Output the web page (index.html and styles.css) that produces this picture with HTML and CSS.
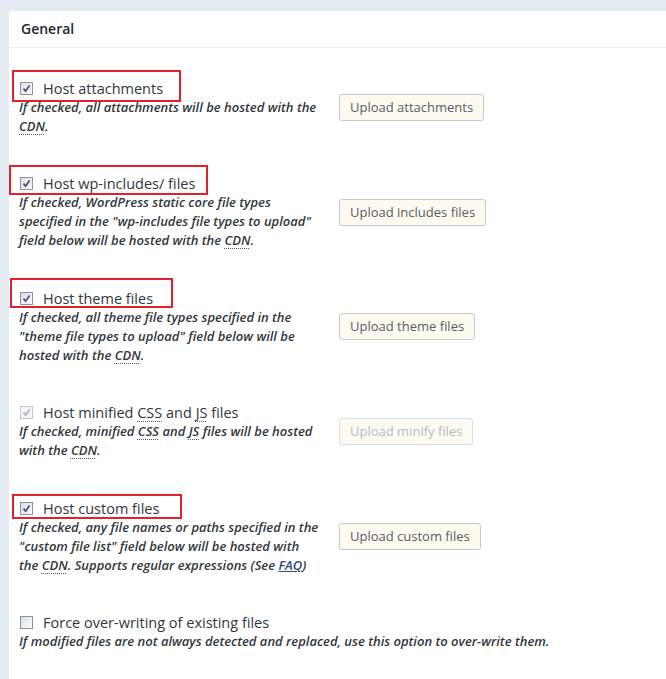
FILE: index.html
```html
<!DOCTYPE html>
<html lang="en">
<head>
<meta charset="utf-8">
<title>General</title>
<link rel="stylesheet" href="styles.css">
</head>
<body>
<div class="postbox">
  <h3 class="hndle">General</h3>
  <div class="inside">

    <div class="opt">
      <div class="opt-main">
        <label class="opt-label">
          <svg class="cb" width="13" height="13" viewBox="0 0 13 13"><defs><linearGradient id="g1" x1="0" y1="0" x2="1" y2="1"><stop offset="0" stop-color="#d9dfe6"/><stop offset="1" stop-color="#fbfcfd"/></linearGradient></defs><rect x="0.5" y="0.5" width="12" height="12" fill="url(#g1)" stroke="#8c939b"/><path d="M3.5 6.6 L5.6 9.2 L9.6 3.4" fill="none" stroke="#3f5078" stroke-width="1.7"/></svg>
          <span class="label-text">Host attachments</span>
          <span class="mark mark-1"></span>
        </label>
        <p class="desc">If checked, all attachments will be hosted with the <abbr>CDN</abbr>.</p>
      </div>
      <div class="opt-action"><button class="btn">Upload attachments</button></div>
    </div>

    <div class="opt">
      <div class="opt-main">
        <label class="opt-label">
          <svg class="cb" width="13" height="13" viewBox="0 0 13 13"><rect x="0.5" y="0.5" width="12" height="12" fill="url(#g1)" stroke="#8c939b"/><path d="M3.5 6.6 L5.6 9.2 L9.6 3.4" fill="none" stroke="#3f5078" stroke-width="1.7"/></svg>
          <span class="label-text">Host wp-includes/ files</span>
          <span class="mark mark-2"></span>
        </label>
        <p class="desc">If checked, WordPress static core file types specified in the "wp-includes file types to upload" field below will be hosted with the <abbr>CDN</abbr>.</p>
      </div>
      <div class="opt-action"><button class="btn">Upload includes files</button></div>
    </div>

    <div class="opt">
      <div class="opt-main">
        <label class="opt-label">
          <svg class="cb" width="13" height="13" viewBox="0 0 13 13"><rect x="0.5" y="0.5" width="12" height="12" fill="url(#g1)" stroke="#8c939b"/><path d="M3.5 6.6 L5.6 9.2 L9.6 3.4" fill="none" stroke="#3f5078" stroke-width="1.7"/></svg>
          <span class="label-text">Host theme files</span>
          <span class="mark mark-3"></span>
        </label>
        <p class="desc">If checked, all theme file types specified in the "theme file types to upload" field below will be hosted with the <abbr>CDN</abbr>.</p>
      </div>
      <div class="opt-action"><button class="btn">Upload theme files</button></div>
    </div>

    <div class="opt">
      <div class="opt-main">
        <label class="opt-label">
          <svg class="cb" width="13" height="13" viewBox="0 0 13 13"><rect x="0.5" y="0.5" width="12" height="12" fill="#f3f5f7" stroke="#c3c9cf"/><path d="M3.5 6.6 L5.6 9.2 L9.6 3.4" fill="none" stroke="#a9b3c2" stroke-width="1.7"/></svg>
          <span class="label-text">Host minified <abbr>CSS</abbr> and <abbr>JS</abbr> files</span>
        </label>
        <p class="desc">If checked, minified <abbr>CSS</abbr> and <abbr>JS</abbr> files will be hosted with the <abbr>CDN</abbr>.</p>
      </div>
      <div class="opt-action"><button class="btn" disabled>Upload minify files</button></div>
    </div>

    <div class="opt">
      <div class="opt-main">
        <label class="opt-label">
          <svg class="cb" width="13" height="13" viewBox="0 0 13 13"><rect x="0.5" y="0.5" width="12" height="12" fill="url(#g1)" stroke="#8c939b"/><path d="M3.5 6.6 L5.6 9.2 L9.6 3.4" fill="none" stroke="#3f5078" stroke-width="1.7"/></svg>
          <span class="label-text">Host custom files</span>
          <span class="mark mark-5"></span>
        </label>
        <p class="desc">If checked, any file names or paths specified in the "custom file list" field below will be hosted with the <abbr>CDN</abbr>. Supports regular expressions (See <a href="#faq">FAQ</a>)</p>
      </div>
      <div class="opt-action"><button class="btn">Upload custom files</button></div>
    </div>

    <div class="opt opt-wide">
      <div class="opt-main">
        <label class="opt-label">
          <svg class="cb" width="13" height="13" viewBox="0 0 13 13"><rect x="0.5" y="0.5" width="12" height="12" fill="url(#g1)" stroke="#8c939b"/></svg>
          <span class="label-text">Force over-writing of existing files</span>
        </label>
        <p class="desc">If modified files are not always detected and replaced, use this option to over-write them.</p>
      </div>
    </div>

  </div>
</div>
</body>
</html>
```

FILE: styles.css
```css
html, body {
  margin: 0;
  padding: 0;
}

body {
  background: #e5ebf2;
  font-family: "Open Sans", "Noto Sans", sans-serif;
  color: #32373c;
  height: 679px;
  overflow: hidden;
}

.postbox {
  margin: 11px 0 0 9px;
  background: #ffffff;
  min-height: 700px;
}

.hndle {
  margin: 0;
  padding: 8px 12px;
  font-size: 14px;
  line-height: 20px;
  font-weight: 600;
  color: #23282d;
  border-bottom: 1px solid #eeeeee;
}

.inside {
  padding: 31px 0 0 10px;
  display: flex;
  flex-direction: column;
  gap: 38.4px;
}

.opt {
  display: grid;
  grid-template-columns: 300px auto;
  column-gap: 20px;
  align-items: center;
}

.opt-wide {
  grid-template-columns: auto;
}

.opt-main {
  display: flex;
  flex-direction: column;
}

.opt-label {
  position: relative;
  display: flex;
  align-items: center;
  gap: 10px;
  font-size: 14.5px;
  line-height: 19px;
  color: #32373c;
  padding-left: 1px;
}

.label-text {
  white-space: nowrap;
}

.cb {
  display: block;
  flex: none;
}

.desc {
  margin: 0;
  font-size: 13px;
  line-height: 19px;
  font-style: italic;
  font-weight: 600;
  color: #32373c;
}

abbr {
  text-decoration: underline dotted #555;
  text-decoration-thickness: 1px;
  text-underline-offset: 3px;
}

.desc a {
  color: #2d4b73;
  text-decoration: underline;
}

.mark {
  position: absolute;
  border: 2px solid #e5202b;
  pointer-events: none;
}

.mark-1 { left: -7px; top: -9px; width: 165px; height: 28px; }
.mark-2 { left: -10px; top: -9px; width: 195px; height: 26px; }
.mark-3 { left: -9px; top: -11px; width: 159px; height: 26px; }
.mark-5 { left: -7px; top: -5px; width: 166px; height: 21px; }

.btn {
  justify-self: start;
  height: 27px;
  padding: 0 10px;
  font-family: "Open Sans", "Noto Sans", sans-serif;
  font-size: 13px;
  line-height: 25px;
  color: #555d66;
  background: #fffaef;
  border: 1px solid #c3cbd3;
  border-radius: 3px;
}

.btn[disabled] {
  color: #b4b9be;
  background: #fffbf2;
  border-color: #d9dee3;
}
```
